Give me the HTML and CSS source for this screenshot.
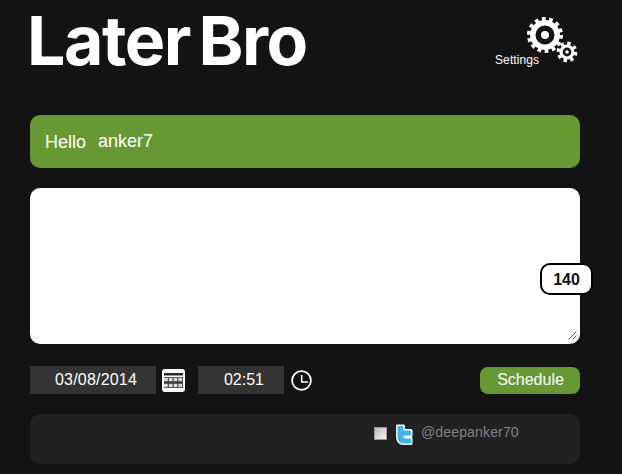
FILE: index.html
```html
<!DOCTYPE html>
<html lang="en">
<head>
  <meta charset="UTF-8">
  <meta name="viewport" content="width=device-width, initial-scale=1.0">
  <title>Later Bro</title>
  <link rel="stylesheet" href="styles.css">
</head>
<body>
  <div class="container">
    <!-- Logo and settings -->
    <div class="header">
      <h1 class="logo">Later Bro</h1>
      <div class="settings">
        <svg class="gears" width="60" height="56" viewBox="0 0 60 56">
          <circle class="gear-teeth" cx="25" cy="24" r="15.500" stroke-width="5" stroke-dasharray="3.600 3.360"/>
          <circle class="gear-ring" cx="25" cy="24" r="12.250" stroke-width="5.500"/>
          <circle class="gear-hub" cx="25" cy="24" r="4"/>
          <circle class="gear-teeth" cx="47" cy="41" r="8.700" stroke-width="3.400" stroke-dasharray="3.400 3.430"/>
          <circle class="gear-ring" cx="47" cy="41" r="6" stroke-width="3.200"/>
          <circle class="gear-hub" cx="47" cy="41" r="1.800"/>
        </svg>
        <span class="settings-label">Settings</span>
      </div>
    </div>

    <div class="hello"><span class="hello-word">Hello</span><span>anker7</span></div>

    <!-- Tweet box -->
    <div class="compose">
      <textarea class="message"></textarea>
      <svg class="grip" width="9" height="9" viewBox="0 0 9 9">
        <path d="M8.500 .5l-8 8M8.500 4.500l-4 4" stroke="#666" stroke-width="1"/>
      </svg>
      <span class="counter">140</span>
    </div>

    <div class="schedule-row">
      <input class="field date-field" type="text" value="03/08/2014">
      <svg class="picker-icon" width="23" height="23" viewBox="0 0 23 23">
        <rect width="23" height="23" rx="3" fill="#fff"/>
        <rect x="2" y="4" width="19" height="2.500" fill="#2b2b2b"/>
        <rect x="2" y="8" width="19" height="11" fill="#3a3a3a"/>
        <path d="M2 10.500h19M2 16.500h19" stroke="#d8d8d8" stroke-width="3.600" stroke-dasharray="3.800 1"/>
      </svg>
      <input class="field time-field" type="text" value="02:51">
      <svg class="picker-icon clock" width="22" height="22" viewBox="0 0 22 22">
        <circle cx="10.500" cy="11.500" r="9.400" fill="none" stroke="#fff" stroke-width="1.800"/>
        <path d="M10.700 6v7H17" fill="none" stroke="#fff" stroke-width="1.500"/>
      </svg>
      <button class="schedule-btn">Schedule</button>
    </div>

    <!-- Accounts -->
    <div class="accounts">
      <span class="check"></span>
      <svg class="twitter" width="20" height="26" viewBox="0 0 20 26">
        <path d="M3.500 4h6v4.500h7.500v5H9.500v1q0 2 2.500 2H17v5h-7Q3.500 21.500 3.500 14z" fill="#3db5e8" stroke="#fff" stroke-width="3" stroke-linejoin="round" paint-order="stroke"/>
      </svg>
      <span class="handle">@deepanker70</span>
    </div>
  </div>
</body>
</html>
```

FILE: styles.css
```css
* {
  margin: 0;
  padding: 0;
  box-sizing: border-box;
}

body {
  font-family: 'Liberation Sans', Arial, sans-serif;
  background: #131313;
  color: #fff;
  overflow: hidden;
}

.container {
  width: 550px;
  margin-left: 30px;
}

/* Header */
.header {
  display: flex;
  justify-content: space-between;
  height: 115px;
}

.logo {
  margin-left: -3px;
  font-family: Inter, 'Liberation Sans', sans-serif;
  font-size: 68px;
  font-weight: 700;
  line-height: 80px;
  letter-spacing: -1.500px;
  word-spacing: -6px;
  color: #fff;
}

.settings {
  position: relative;
  width: 85px;
  height: 70px;
}

.gears {
  position: absolute;
  left: 25px;
  top: 11px;
}

.settings-label {
  position: absolute;
  left: 0;
  top: 53px;
  font-size: 12px;
  letter-spacing: 0.1px;
}

/* Hello bar */
.hello {
  display: flex;
  align-items: center;
  gap: 12px;
  height: 53px;
  padding-left: 15px;
  background: #669933;
  border-radius: 10px;
  font-size: 18px;
}

.hello-word {
  margin-top: 2px;
}

/* Message */
.compose {
  position: relative;
  margin-top: 20px;
  height: 156px;
}

.message {
  display: block;
  width: 100%;
  height: 156px;
  border: none;
  border-radius: 10px;
  outline: none;
  background: #fff;
  resize: none;
}

.grip {
  position: absolute;
  left: 538px;
  top: 143px;
}

.counter {
  position: absolute;
  left: 510px;
  top: 75px;
  width: 53px;
  height: 32px;
  border: 2px solid #000;
  border-radius: 10px;
  background: #fff;
  color: #111;
  font-size: 16px;
  font-weight: bold;
  line-height: 30px;
  text-align: center;
}

/* Date and time */
.schedule-row {
  display: flex;
  align-items: center;
  margin-top: 22px;
  height: 28px;
}

.field {
  height: 28px;
  border: none;
  outline: none;
  background: #333;
  color: #fff;
  font-family: inherit;
  font-size: 16px;
  text-align: center;
}

.date-field {
  width: 126px;
  padding-left: 6px;
  letter-spacing: 0.2px;
}

.time-field {
  width: 86px;
  margin-left: 13px;
  padding-left: 6px;
}

.picker-icon {
  margin-left: 6px;
}

.clock {
  margin-left: 7px;
}

.schedule-btn {
  margin-left: auto;
  width: 100px;
  height: 27px;
  padding-left: 1px;
  border: none;
  border-radius: 8px;
  background: #669933;
  color: #fff;
  font-family: inherit;
  font-size: 16px;
}

/* Accounts */
.accounts {
  display: flex;
  align-items: flex-start;
  height: 50px;
  margin-top: 20px;
  padding: 8px 0 0 344px;
  background: #212121;
  border-radius: 10px;
}

.check {
  width: 13px;
  height: 13px;
  margin: 5px 7px 0 0;
  border: 1px solid #999;
  background: linear-gradient(135deg, #bbb, #f2f2f2);
}

.handle {
  margin: 2px 0 0 7px;
  color: #808080;
  font-size: 14px;
  letter-spacing: 0.15px;
}

.gear-teeth,
.gear-ring {
  fill: none;
  stroke: #fff;
}

.gear-hub {
  fill: #fff;
}
```
